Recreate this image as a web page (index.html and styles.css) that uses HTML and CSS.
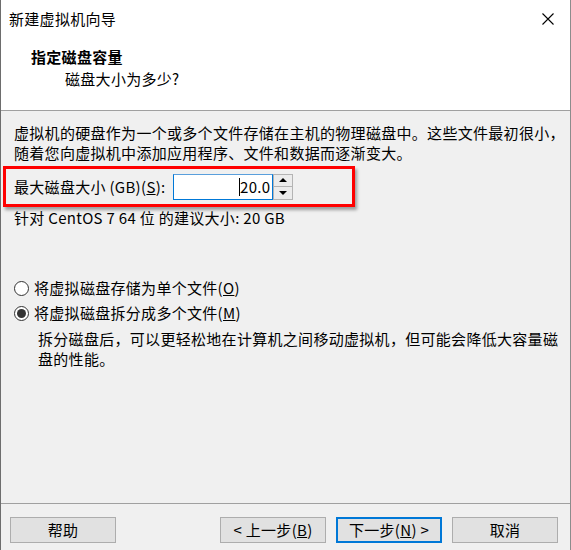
FILE: index.html
```html
<!DOCTYPE html>
<html lang="zh-CN">
<head>
<meta charset="utf-8">
<title>新建虚拟机向导</title>
<link rel="stylesheet" href="styles.css">
</head>
<body>
<div class="window">
  <div class="top">
    <div class="titlebar">
      <span class="title">新建虚拟机向导</span>
      <svg class="close" width="12" height="12" viewBox="0 0 12 12"><path d="M0.5 0.5 L11.5 11.5 M11.5 0.5 L0.5 11.5" stroke="#000" stroke-width="1.1" fill="none"/></svg>
    </div>
    <div class="header">
      <div class="h-title">指定磁盘容量</div>
      <div class="h-sub">磁盘大小为多少?</div>
    </div>
  </div>
  <div class="content">
    <p class="desc">虚拟机的硬盘作为一个或多个文件存储在主机的物理磁盘中。这些文件最初很小，<br>随着您向虚拟机中添加应用程序、文件和数据而逐渐变大。</p>
    <div class="size-box">
      <span class="size-label">最大磁盘大小 (GB)(<u>S</u>):</span>
      <div class="spin">
        <div class="spin-input"><span class="caret"></span>20.0</div>
        <div class="spin-btns">
          <div class="spin-btn"><span class="arrow-up"></span></div>
          <div class="spin-btn"><span class="arrow-down"></span></div>
        </div>
      </div>
    </div>
    <p class="rec">针对 CentOS 7 64 位 的建议大小: 20 GB</p>
    <div class="radios">
      <div class="radio"><span class="circle"></span><span>将虚拟磁盘存储为单个文件(<u>O</u>)</span></div>
      <div class="radio"><span class="circle checked"></span><span>将虚拟磁盘拆分成多个文件(<u>M</u>)</span></div>
      <p class="radio-desc">拆分磁盘后，可以更轻松地在计算机之间移动虚拟机，但可能会降低大容量磁<br>盘的性能。</p>
    </div>
  </div>
  <div class="footer">
    <button class="btn btn-help">帮助</button>
    <button class="btn">&lt; 上一步(<u>B</u>)</button>
    <button class="btn btn-default">下一步(<u>N</u>) &gt;</button>
    <button class="btn">取消</button>
  </div>
</div>
</body>
</html>
```

FILE: styles.css
```css
html, body {
  margin: 0;
  padding: 0;
  background: #f0f0f0;
}

.window {
  box-sizing: border-box;
  width: 571px;
  height: 550px;
  border-left: 1px solid #6d6d6d;
  border-right: 1px solid #8c8c8c;
  display: flex;
  flex-direction: column;
  font-family: "Noto Sans CJK SC", "Noto Sans", sans-serif;
  font-size: 15px;
  letter-spacing: 0.3px;
  color: #000;
  background: #f0f0f0;
}

.top {
  background: #fff;
  height: 110px;
  border-bottom: 1px solid #a0a0a0;
  flex: none;
}

.titlebar {
  height: 38px;
  display: flex;
  align-items: center;
  justify-content: space-between;
  padding: 0 16px 0 8px;
}

.title {
  line-height: 20px;
}

.close {
  display: block;
}

.header {
  padding: 8px 0 0 30px;
}

.h-title {
  font-weight: bold;
  line-height: 22px;
}

.h-sub {
  margin-top: 1px;
  padding-left: 34px;
  line-height: 20px;
}

.content {
  flex: 1;
  padding: 12px 0 0 13px;
}

.desc {
  margin: 0;
  white-space: nowrap;
  line-height: 20px;
}

.size-box {
  margin: 3px 0 0 -11px;
  width: 338px;
  height: 35px;
  border: 3px solid #ff0000;
  box-shadow: 2px 3px 3px rgba(0, 0, 0, 0.35);
  display: flex;
  align-items: center;
  gap: 8px;
  padding-left: 8px;
}

.size-label {
  line-height: 20px;
}

.spin {
  display: flex;
}

.spin-input {
  box-sizing: border-box;
  width: 100px;
  height: 26px;
  background: #fff;
  border: 1px solid #0078d7;
  border-top-color: #5a9fdc;
  display: flex;
  align-items: center;
  justify-content: flex-end;
  padding-right: 2px;
  line-height: 20px;
}

.caret {
  display: inline-block;
  width: 0;
  height: 18px;
  border-left: 1px solid #000;
}

.spin-btns {
  display: flex;
  flex-direction: column;
  width: 20px;
  height: 26px;
}

.spin-btn {
  box-sizing: border-box;
  flex: 1;
  background: #ececec;
  border: 1px solid #b4b4b4;
  display: flex;
  align-items: center;
  justify-content: center;
}

.spin-btn + .spin-btn {
  border-top: none;
}

.arrow-up {
  width: 0;
  height: 0;
  border-left: 4px solid transparent;
  border-right: 4px solid transparent;
  border-bottom: 4px solid #000;
}

.arrow-down {
  width: 0;
  height: 0;
  border-left: 4px solid transparent;
  border-right: 4px solid transparent;
  border-top: 4px solid #000;
}

.rec {
  margin: 1px 0 0;
  line-height: 20px;
}

.radios {
  margin-top: 50px;
}

.radio {
  display: flex;
  align-items: center;
  gap: 5px;
  line-height: 20px;
  margin-bottom: 5px;
}

.circle {
  box-sizing: border-box;
  width: 15px;
  height: 15px;
  border: 1px solid #333;
  border-radius: 50%;
  background: #fff;
  display: flex;
  align-items: center;
  justify-content: center;
}

.circle.checked::after {
  content: "";
  width: 9px;
  height: 9px;
  border-radius: 50%;
  background: #333;
}

.radio-desc {
  margin: 6px 0 0 24px;
  white-space: nowrap;
  line-height: 20px;
}

.footer {
  flex: none;
  height: 47px;
  box-sizing: border-box;
  border-top: 1px solid #a0a0a0;
  padding: 13px 12px 0 9px;
  display: flex;
  align-items: flex-start;
  gap: 10px;
}

.btn {
  box-sizing: border-box;
  width: 106px;
  height: 26px;
  padding: 0;
  background: #e1e1e1;
  border: 1px solid #adadad;
  font-family: "Noto Sans CJK SC", "Noto Sans", sans-serif;
  font-size: 15px;
  letter-spacing: 0.3px;
  color: #000;
  line-height: 20px;
}

.btn-help {
  margin-right: auto;
}

.btn-default {
  border: 2px solid #0078d7;
}
```
